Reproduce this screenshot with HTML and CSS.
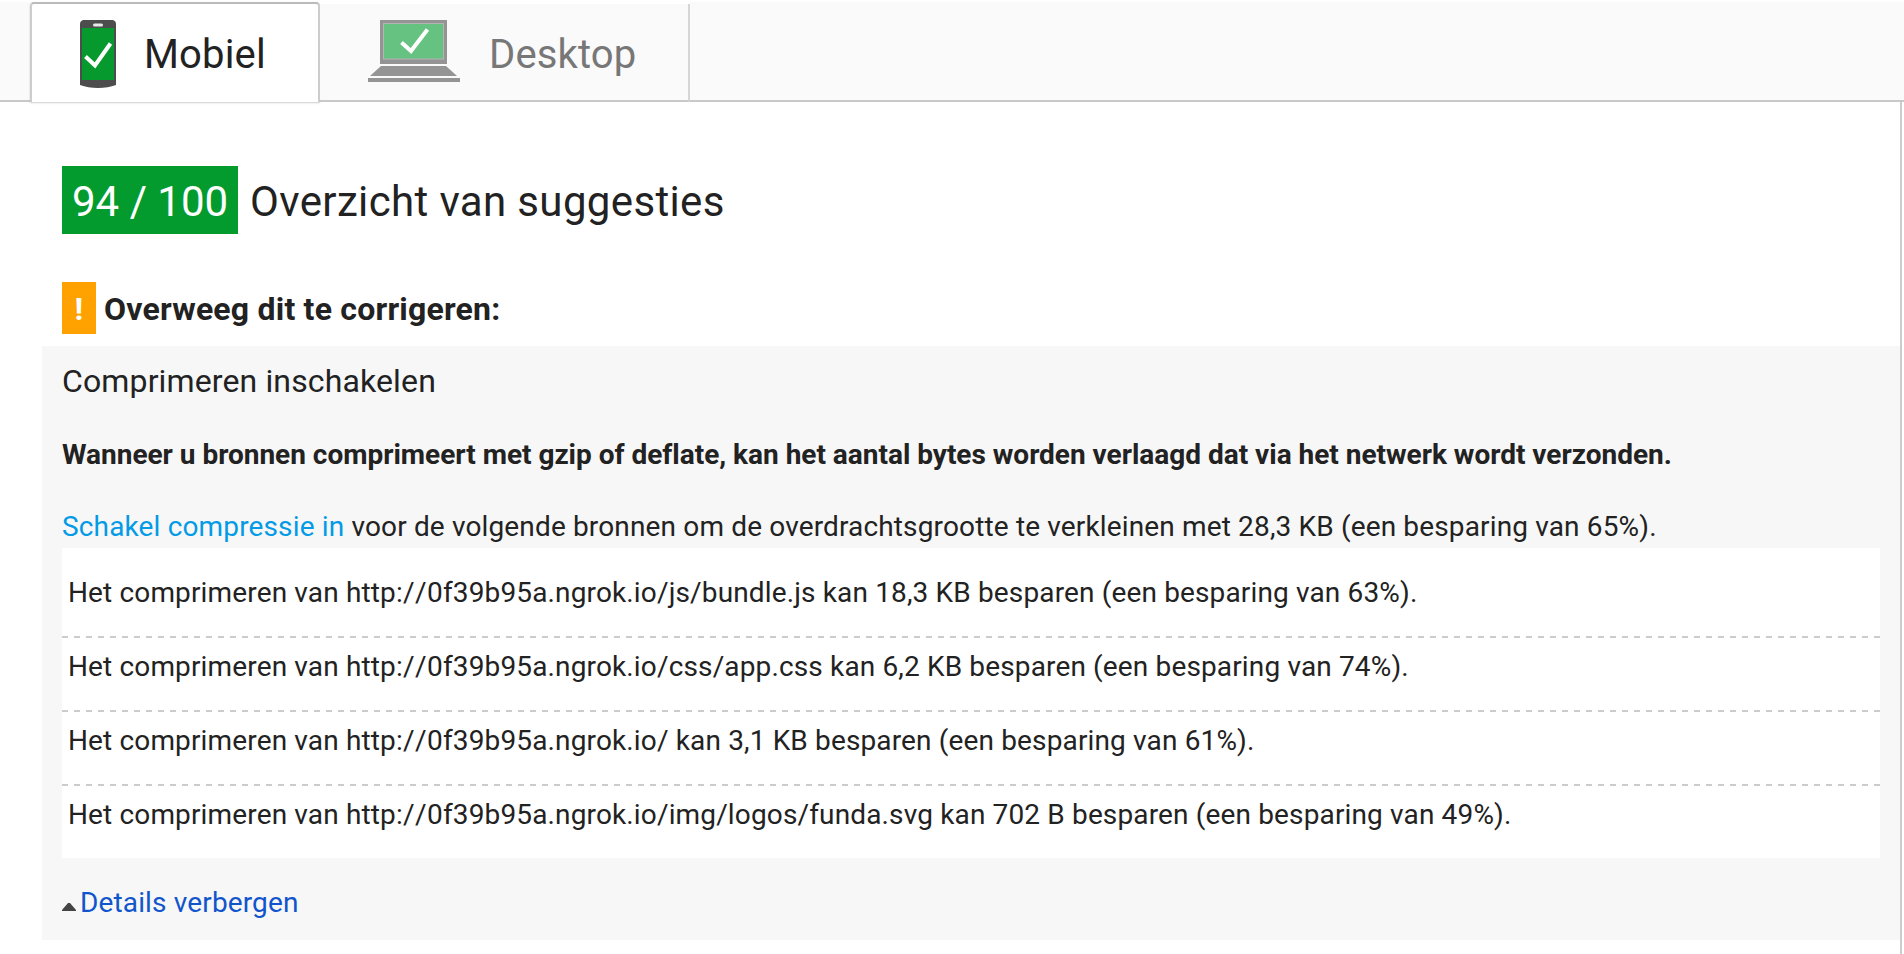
FILE: index.html
```
<!DOCTYPE html>
<html lang="nl">
<head>
<meta charset="utf-8">
<title>PageSpeed</title>
<link rel="stylesheet" href="styles.css">
</head>
<body>
<nav class="tabs">
  <div class="lead"></div>
  <a class="tab active">
    <svg class="phone" width="36" height="68" viewBox="0 0 36 68">
      <path fill="#4d4d4d" d="M3 0H33Q36 1 36 4V65Q28 68 18 68T0 65V4Q0 1 3 0Z"/>
      <rect x="13" y="3.5" width="10" height="3" rx="1.5" fill="#e8e8e8"/>
      <rect x="2" y="8" width="32" height="52" fill="#069a2e"/>
      <path d="M5.500 36.500L15 45.500L30.500 23.500" fill="none" stroke="#fff" stroke-width="4"/>
    </svg>
    <span>Mobiel</span>
  </a>
  <a class="tab desktop">
    <svg class="laptop" width="92" height="62" viewBox="0 0 92 62">
      <rect x="12" width="67" height="44" fill="#949494"/>
      <rect x="15" y="3" width="61" height="36.500" fill="#b4b4b4"/>
      <rect x="16" y="4" width="59" height="34.500" fill="#66c281"/>
      <path d="M33.500 22.500L43 31L59.500 9.500" fill="none" stroke="#fff" stroke-width="4"/>
      <path d="M13 46H78L89 56H2Z" fill="#949494"/>
      <rect y="58" width="92" height="4" fill="#949494"/>
    </svg>
    <span>Desktop</span>
  </a>
  <div class="rest"></div>
</nav>
<main class="content">
  <h2 class="title"><span class="score">94 / 100</span>Overzicht van suggesties</h2>
  <h3 class="group"><span class="mark">!</span>Overweeg dit te corrigeren:</h3>
  <section class="panel">
    <h4 class="rule">Comprimeren inschakelen</h4>
    <p class="summary">Wanneer u bronnen comprimeert met gzip of deflate, kan het aantal bytes worden verlaagd dat via het netwerk wordt verzonden.</p>
    <p class="intro"><a class="help">Schakel compressie in</a> voor de volgende bronnen om de overdrachtsgrootte te verkleinen met 28,3 KB (een besparing van 65%).</p>
    <ul class="list">
      <li>Het comprimeren van http:<span class="slashes">//</span>0f39b95a.ngrok.io/js/bundle.js kan 18,3 KB besparen (een besparing van 63%).</li>
      <li>Het comprimeren van http:<span class="slashes">//</span>0f39b95a.ngrok.io/css/app.css kan 6,2 KB besparen (een besparing van 74%).</li>
      <li>Het comprimeren van http:<span class="slashes">//</span>0f39b95a.ngrok.io/ kan 3,1 KB besparen (een besparing van 61%).</li>
      <li>Het comprimeren van http:<span class="slashes">//</span>0f39b95a.ngrok.io/img/logos/funda.svg kan 702 B besparen (een besparing van 49%).</li>
    </ul>
    <a class="toggle"><svg class="arrow" width="14" height="8" viewBox="0 0 14 8"><path d="M0 8V7L6 0H8L14 7V8Z" fill="#444"/></svg>Details verbergen</a>
  </section>
</main>
</body>
</html>
```
FILE: styles.css
```
* { box-sizing: border-box; margin: 0; padding: 0; }
body { background: #fff; color: #222; font-family: Roboto, "Liberation Sans", sans-serif; font-size: 28px; line-height: 35px; height: 954px; overflow: hidden; font-variant-ligatures: none; }
.tabs { display: flex; height: 102px; }
.lead { width: 30px; margin-top: 2px; background: #fafafa; border-bottom: 2px solid #c9c9c9; }
.tab { display: flex; font-size: 40px; line-height: 50px; letter-spacing: 0.15px; }
.tab span { padding-top: 10px; }
.active { width: 290px; height: 100px; margin-top: 2px; padding: 16px 0 0 48px; background: #fff; border: 2px solid #ccc; border-top-color: #bbb; border-bottom: 0; border-radius: 4px 4px 0 0; box-shadow: 0 1px 2px rgba(0, 0, 0, 0.2); }
.desktop { width: 370px; padding: 16px 0 0 48px; margin-top: 4px; background: #fafafa; color: #777; border-right: 2px solid #d6d6d6; border-bottom: 2px solid #c9c9c9; }
.rest { flex: 1; margin-top: 2px; background: #fafafa; border-bottom: 2px solid #c9c9c9; }
.phone { margin-right: 28px; }
.laptop { margin-right: 29px; }
.content { width: 1902px; height: 852px; padding: 64px 0 0 42px; border-right: 2px solid #ccc; }
.title { display: flex; height: 68px; margin: 0 0 48px 20px; font-size: 42px; line-height: 71px; font-weight: 400; letter-spacing: 0.36px; }
.score { width: 176px; margin-right: 12px; padding-left: 10px; background: #039b2e; color: #fff; letter-spacing: 0; }
.group { display: flex; height: 52px; margin: 0 0 12px 20px; font-size: 32px; line-height: 54px; font-weight: 700; letter-spacing: 0.21px; }
.mark { width: 34px; margin-right: 8px; background: #ffa200; color: #fff; text-align: center; }
.panel { height: 594px; padding: 16px 20px 0; background: #f7f7f7; }
.rule { margin-bottom: 37px; font-size: 32px; line-height: 38px; font-weight: 400; letter-spacing: 0.13px; }
.summary { margin-bottom: 37px; font-weight: 700; letter-spacing: -0.012px; }
.intro { margin-bottom: 4px; white-space: nowrap; letter-spacing: 0.148px; }
.help { color: #039be5; }
.list { margin-bottom: 27px; background: #fff; list-style: none; letter-spacing: 0.145px; }
.list li { padding: 11px 6px 26px; }
.list li:first-child { padding-top: 27px; }
.list li + li { padding-top: 13px; background: repeating-linear-gradient(90deg, #ccc 0 6px, #fff 6px 12px) 0 0 / 100% 2px no-repeat; }
.slashes { letter-spacing: 0.5px; font-kerning: none; }
.toggle { display: flex; align-items: center; color: #15c; letter-spacing: 0.14px; }
.arrow { margin: 8px 4px 0 0; }
```
